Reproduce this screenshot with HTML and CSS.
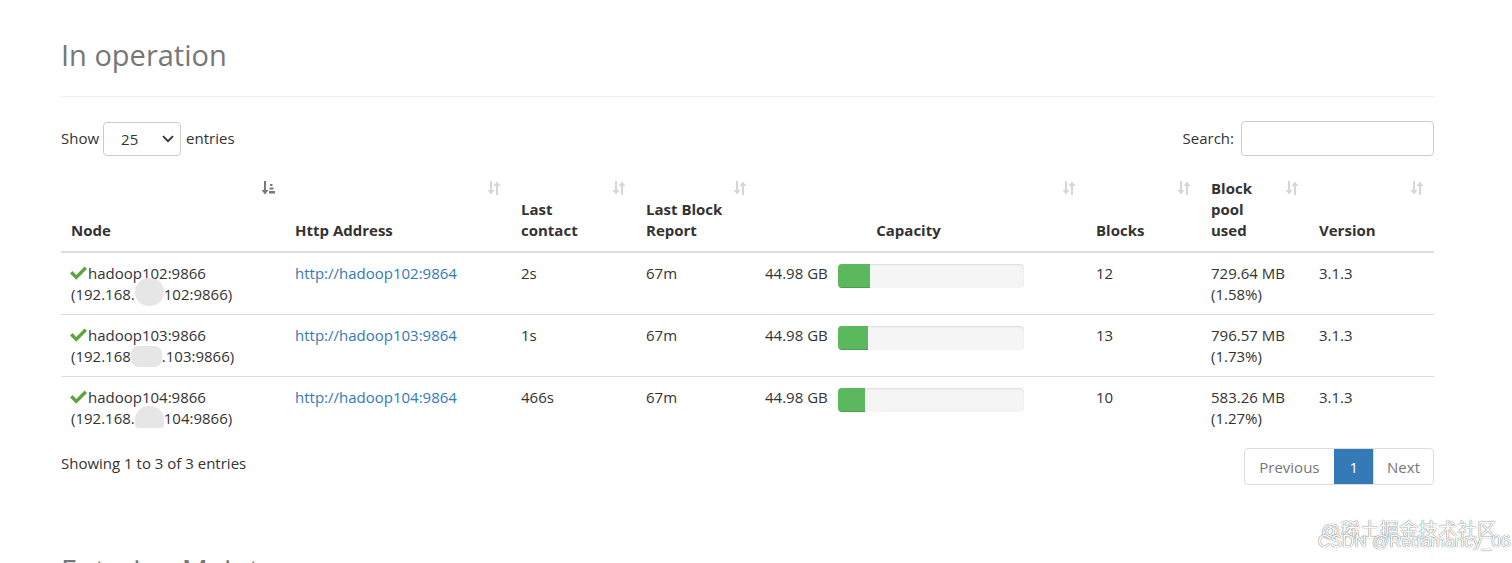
FILE: index.html
```html
<!DOCTYPE html>
<html>
<head>
<meta charset="utf-8">
<link rel="stylesheet" href="styles.css">
</head>
<body>
<div class="page">
  <div class="page-header"><h2 class="title">In operation</h2></div>

  <div class="controls">
    <div class="length">
      <span>Show</span>
      <div class="select"><span class="sel-val">25</span>
        <svg class="chev" viewBox="0 0 12 8" width="12" height="8"><path d="M1 1.2l5 5 5-5" fill="none" stroke="#333" stroke-width="1.8"/></svg>
      </div>
      <span>entries</span>
    </div>
    <div class="search">
      <span>Search:</span>
      <div class="input"></div>
    </div>
  </div>

  <table class="nodes">
    <colgroup>
      <col class="c-node"><col class="c-http"><col class="c-contact"><col class="c-report"><col class="c-cap"><col class="c-blocks"><col class="c-pool"><col class="c-ver">
    </colgroup>
    <thead>
      <tr>
        <th>Node<svg class="sort active" viewBox="0 0 14 14" width="14" height="14"><path d="M3 0h2v9h2.5L4 13.5 0.5 9H3z M9 3h2.5v2H9z M8.5 6.5h4v2h-4z M8 10h6v2.5H8z" fill="currentColor"/></svg></th>
        <th>Http Address<svg class="sort" viewBox="0 0 14 14" width="14" height="14"><path d="M3 0h2v9h2.5L4 13.5 0.5 9H3z M9 5H6.5L10 0.5 13.5 5H11v9H9z" fill="currentColor"/></svg></th>
        <th>Last<br>contact<svg class="sort" viewBox="0 0 14 14" width="14" height="14"><path d="M3 0h2v9h2.5L4 13.5 0.5 9H3z M9 5H6.5L10 0.5 13.5 5H11v9H9z" fill="currentColor"/></svg></th>
        <th>Last Block<br>Report<svg class="sort" viewBox="0 0 14 14" width="14" height="14"><path d="M3 0h2v9h2.5L4 13.5 0.5 9H3z M9 5H6.5L10 0.5 13.5 5H11v9H9z" fill="currentColor"/></svg></th>
        <th class="center">Capacity<svg class="sort" viewBox="0 0 14 14" width="14" height="14"><path d="M3 0h2v9h2.5L4 13.5 0.5 9H3z M9 5H6.5L10 0.5 13.5 5H11v9H9z" fill="currentColor"/></svg></th>
        <th>Blocks<svg class="sort" viewBox="0 0 14 14" width="14" height="14"><path d="M3 0h2v9h2.5L4 13.5 0.5 9H3z M9 5H6.5L10 0.5 13.5 5H11v9H9z" fill="currentColor"/></svg></th>
        <th>Block<br>pool<br>used<svg class="sort" viewBox="0 0 14 14" width="14" height="14"><path d="M3 0h2v9h2.5L4 13.5 0.5 9H3z M9 5H6.5L10 0.5 13.5 5H11v9H9z" fill="currentColor"/></svg></th>
        <th>Version<svg class="sort" viewBox="0 0 14 14" width="14" height="14"><path d="M3 0h2v9h2.5L4 13.5 0.5 9H3z M9 5H6.5L10 0.5 13.5 5H11v9H9z" fill="currentColor"/></svg></th>
      </tr>
    </thead>
    <tbody>
      <tr>
        <td><svg class="ok" viewBox="0 0 18 14" width="17" height="14"><path d="M0 7.6L2.6 5l4 4L15.4 0.2 18 2.8 6.6 14.2z" fill="currentColor"/></svg>hadoop102:9866<br>(192.168.<span class="blur b1"></span>102:9866)</td>
        <td><a href="#">http://hadoop102:9864</a></td>
        <td>2s</td>
        <td>67m</td>
        <td><div class="cap"><span class="cap-val">44.98 GB</span><div class="bar"><div class="fill" style="width:17.2%"></div></div></div></td>
        <td>12</td>
        <td>729.64 MB<br>(1.58%)</td>
        <td>3.1.3</td>
      </tr>
      <tr>
        <td><svg class="ok" viewBox="0 0 18 14" width="17" height="14"><path d="M0 7.6L2.6 5l4 4L15.4 0.2 18 2.8 6.6 14.2z" fill="currentColor"/></svg>hadoop103:9866<br>(192.168<span class="blur b2"></span>.103:9866)</td>
        <td><a href="#">http://hadoop103:9864</a></td>
        <td>1s</td>
        <td>67m</td>
        <td><div class="cap"><span class="cap-val">44.98 GB</span><div class="bar"><div class="fill" style="width:16.1%"></div></div></div></td>
        <td>13</td>
        <td>796.57 MB<br>(1.73%)</td>
        <td>3.1.3</td>
      </tr>
      <tr>
        <td><svg class="ok" viewBox="0 0 18 14" width="17" height="14"><path d="M0 7.6L2.6 5l4 4L15.4 0.2 18 2.8 6.6 14.2z" fill="currentColor"/></svg>hadoop104:9866<br>(192.168.<span class="blur b3"></span>104:9866)</td>
        <td><a href="#">http://hadoop104:9864</a></td>
        <td>466s</td>
        <td>67m</td>
        <td><div class="cap"><span class="cap-val">44.98 GB</span><div class="bar"><div class="fill" style="width:14.6%"></div></div></div></td>
        <td>10</td>
        <td>583.26 MB<br>(1.27%)</td>
        <td>3.1.3</td>
      </tr>
    </tbody>
  </table>

  <div class="footer-row">
    <div class="info">Showing 1 to 3 of 3 entries</div>
    <div class="pager">
      <span class="pg disabled prev">Previous</span>
      <span class="pg current">1</span>
      <span class="pg disabled nextpg">Next</span>
    </div>
  </div>

  <div class="page-header next"><h2 class="title">Entering Maintenance</h2></div>
</div>
<div class="watermark">
  <span class="wm1">@稀土掘金技术社区</span>
  <span class="wm2">CSDN @Redamancy_06</span>
</div>
</body>
</html>
```
FILE: styles.css
```css
html, body {
  margin: 0;
  padding: 0;
  background: #fff;
}
body {
  font-family: "Open Sans", "Noto Sans", "Noto Sans CJK SC", sans-serif;
  font-size: 15px;
  line-height: 21px;
  color: #333;
  overflow: hidden;
}
.page {
  width: 1373px;
  margin-left: 61px;
  padding-top: 39px;
}
.page-header {
  border-bottom: 1px solid #eee;
  padding-bottom: 25px;
}
.title {
  margin: 0;
  font-size: 29px;
  line-height: 32px;
  font-weight: 400;
  color: #777;
}
.controls {
  margin-top: 24px;
  display: flex;
  justify-content: space-between;
  align-items: center;
}
.length, .search {
  display: flex;
  align-items: center;
  gap: 5px;
}
.select {
  width: 78px;
  height: 34px;
  box-sizing: border-box;
  border: 1px solid #ccc;
  border-radius: 4px;
  display: flex;
  align-items: center;
  justify-content: space-between;
  padding: 2px 6px 0 17px;
  margin-left: -1px;
}
.sel-val { font-size: 15px; }
.chev { margin-top: -2px; }
.input {
  width: 193px;
  height: 35px;
  box-sizing: border-box;
  border: 1px solid #ccc;
  border-radius: 4px;
  margin-left: 2px;
}
.nodes {
  margin-top: 12px;
  width: 1373px;
  table-layout: fixed;
  border-collapse: separate;
  border-spacing: 0;
}
.c-node { width: 224px; }
.c-http { width: 226px; }
.c-contact { width: 125px; }
.c-report { width: 121px; }
.c-cap { width: 329px; }
.c-blocks { width: 115px; }
.c-pool { width: 108px; }
.c-ver { width: 125px; }
.nodes th {
  position: relative;
  text-align: left;
  vertical-align: bottom;
  font-weight: 700;
  padding: 10px 30px 10px 10px;
  border-bottom: 2px solid #ddd;
  white-space: nowrap;
}
.nodes th.center { text-align: center; padding-right: 36px; }
.sort {
  position: absolute;
  top: 13px;
  right: 10px;
  color: #d6d6d6;
}
.sort.active { color: #7a7a7a; }
.nodes td {
  vertical-align: top;
  padding: 10px 10px 9px 10px;
  border-top: 1px solid #ddd;
  white-space: nowrap;
}
.nodes tbody tr:first-child td { border-top: 0; padding-top: 10px; padding-bottom: 8px; }
.ok {
  color: #5fa341;
  vertical-align: -1px;
  margin-right: 1px;
  margin-left: -1px;
}
.blur {
  display: inline-block;
  width: 29px;
  height: 21px;
  background: #e6e6e6;
  vertical-align: top;
}
.b1 { border-radius: 14px; height: 28px; margin-top: -6px; }
.b2 { border-radius: 8px; width: 31px; }
.b3 { border-radius: 14px 14px 4px 4px; height: 22px; margin-top: -2px; }
a { color: #337ab7; text-decoration: none; }
.cap {
  display: flex;
  align-items: flex-start;
}
.cap-val {
  width: 61px;
  text-align: right;
  margin-right: 12px;
  margin-left: -2px;
}
.bar {
  width: 186px;
  height: 24px;
  margin-top: 1px;
  background: #f5f5f5;
  border-radius: 4px;
  box-shadow: inset 0 1px 2px rgba(0,0,0,.1);
  overflow: hidden;
}
.fill {
  height: 100%;
  background: #5cb85c;
  box-shadow: inset 0 -1px 0 rgba(0,0,0,.15);
}
.footer-row {
  margin-top: 10px;
  display: flex;
  justify-content: space-between;
  align-items: flex-start;
}
.info { padding-top: 5px; }
.pager {
  display: flex;
  border: 1px solid #ddd;
  border-radius: 4px;
  overflow: hidden;
}
.pg {
  padding: 8px 14px 6px;
  line-height: 21px;
  color: #777;
}
.pg.prev { padding-left: 14px; padding-right: 14px; }
.pg + .pg { border-left: 1px solid #ddd; }
.pg.current {
  background: #337ab7;
  color: #fff;
  padding-left: 15px;
  padding-right: 15px;
  border-left-color: #337ab7;
}
.pg.nextpg { padding-left: 13px; padding-right: 13px; }
.next {
  margin-top: 69px;
}
.watermark {
  position: absolute;
  left: 1318px;
  top: 522px;
  width: 190px;
  line-height: 18px;
  color: #fff;
  text-shadow: 0 0 1px #777, 0 0 1px #777;
  font-family: "Liberation Sans", "Noto Sans CJK SC", sans-serif;
}
.wm1, .wm2 { display: block; white-space: nowrap; }
.wm1 { margin-left: 3px; font-size: 19px; letter-spacing: 0.5px; }
.wm2 { margin-top: -7px; font-size: 17px; letter-spacing: 0.2px; }
```
